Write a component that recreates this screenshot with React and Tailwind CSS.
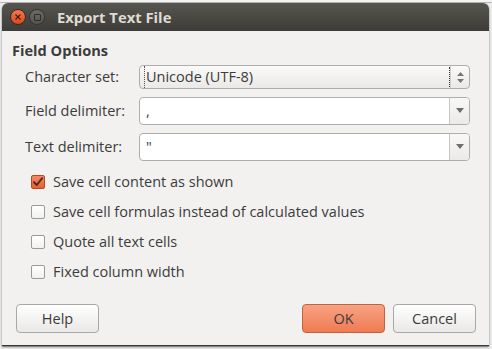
import React from "react";

const font = { fontFamily: '"Open Sans", "Noto Sans", "DejaVu Sans", sans-serif' };

function Checkbox({ checked }) {
  if (checked) {
    return (
      <span className="w-[14px] h-[14px] rounded-[2px] border border-[#b54a24] bg-gradient-to-b from-[#f48a62] to-[#e5622f] flex items-center justify-center shrink-0">
        <svg width="12" height="12" viewBox="0 0 12 12">
          <path d="M2 6.2 L4.8 9 L10.2 2.2" fill="none" stroke="#5a2a18" strokeWidth="2" strokeLinecap="round" strokeLinejoin="round" />
        </svg>
      </span>
    );
  }
  return (
    <span className="w-[14px] h-[14px] rounded-[2px] border border-[#9a9a9a] bg-gradient-to-b from-[#ffffff] to-[#f1f1f1] shrink-0" />
  );
}

function Entry({ value }) {
  return (
    <div className="flex-1 h-[28px] flex rounded-[4px] border border-[#b0aeab] bg-white overflow-hidden">
      <div className="flex-1 pl-[6px] flex items-center text-[14.5px] text-[#3c3c3c]">{value}</div>
      <div className="w-[20px] border-l border-[#c8c6c3] bg-gradient-to-b from-[#f8f8f8] to-[#eceae8] flex items-center justify-center">
        <svg width="8" height="6" viewBox="0 0 8 6">
          <path d="M0 0 L8 0 L4 5 Z" fill="#6e6e6e" />
        </svg>
      </div>
    </div>
  );
}

export default function App() {
  return (
    <div className="w-[492px] h-[349px] bg-[#ececec] overflow-hidden" style={font}>
      <div className="h-[3px] bg-[#f4f4f4] border-b border-[#b8b8b8] text-[10px] leading-[3px]" />
      <div className="pl-[2px] flex">
        <div className="w-[487px] h-[343px] flex flex-col rounded-t-[6px] overflow-hidden bg-[#f2f1f0] border-b border-[#3a3a3a] shadow-[0_1px_2px_rgba(0,0,0,0.6)]">
          {/* Title bar */}
          <div className="h-[28px] flex items-center bg-gradient-to-b from-[#57554f] to-[#3d3c38] pl-[8px]">
            <div className="w-[16px] h-[16px] rounded-full bg-gradient-to-b from-[#f5784a] to-[#d9481c] border border-[#3a2a22] flex items-center justify-center">
              <svg width="6" height="6" viewBox="0 0 6 6">
                <path d="M0.5 0.5 L5.5 5.5 M5.5 0.5 L0.5 5.5" stroke="#4a1e10" strokeWidth="1.2" />
              </svg>
            </div>
            <div className="ml-[3px] w-[16px] h-[16px] rounded-full bg-gradient-to-b from-[#6c6b66] to-[#55544f] border border-[#35342f] flex items-center justify-center">
              <div className="w-[7px] h-[7px] border border-[#2e2d29] rounded-[1px]" />
            </div>
            <div className="ml-[12px] text-[14.8px] font-bold text-[#dfdbd2] leading-none">Export Text File</div>
          </div>
          {/* Body */}
          <div className="flex-1 flex flex-col px-[10px]">
            <div className="mt-[9px] text-[14.6px] font-bold text-[#3c3c3c] leading-[20px]">Field Options</div>
            <div className="mt-[5px] pl-[13px] pr-[9px] flex flex-col gap-[8px]">
              <div className="flex items-center">
                <div className="w-[114px] text-[14.5px] text-[#3c3c3c]">Character set:</div>
                <div className="flex-1 h-[24px] flex rounded-[4px] border border-[#b0aeab] bg-gradient-to-b from-[#fafafa] to-[#ebe9e7] overflow-hidden">
                  <div className="flex-1 pl-[4px] flex items-center text-[14.5px] text-[#3c3c3c]">
                    <span className="border border-dotted border-[#555] border-r-0 border-y-0 pl-[1px]">Unicode (UTF-8)</span>
                  </div>
                  <div className="w-[1px] my-[1px] border-l border-dotted border-[#333]" />
                  <div className="w-[19px] border-l border-[#d0cecb] flex flex-col items-center justify-center gap-[3px]">
                    <svg width="7" height="4" viewBox="0 0 7 4"><path d="M0 4 L3.5 0 L7 4 Z" fill="#777" /></svg>
                    <svg width="7" height="4" viewBox="0 0 7 4"><path d="M0 0 L7 0 L3.5 4 Z" fill="#777" /></svg>
                  </div>
                </div>
              </div>
              <div className="flex items-center">
                <div className="w-[114px] text-[14.5px] text-[#3c3c3c]">Field delimiter:</div>
                <Entry value="," />
              </div>
              <div className="flex items-center">
                <div className="w-[114px] text-[14.5px] text-[#3c3c3c]">Text delimiter:</div>
                <Entry value={'"'} />
              </div>
            </div>
            <div className="mt-[6px] pl-[19px] flex flex-col">
              {[
                ["Save cell content as shown", true],
                ["Save cell formulas instead of calculated values", false],
                ["Quote all text cells", false],
                ["Fixed column width", false],
              ].map(([t, c]) => (
                <div key={t} className="h-[30px] flex items-center gap-[8px]">
                  <Checkbox checked={c} />
                  <span className="text-[14.5px] text-[#3c3c3c]">{t}</span>
                </div>
              ))}
            </div>
            <div className="mt-auto mb-[12px] flex items-center">
              <button className="ml-[4px] w-[83px] h-[29px] rounded-[4px] border border-[#aaa8a5] bg-gradient-to-b from-[#ffffff] to-[#e9e8e6] text-[14.5px] text-[#3c3c3c]">Help</button>
              <div className="flex-1" />
              <button className="w-[83px] h-[29px] rounded-[4px] border border-[#c2623e] bg-gradient-to-b from-[#f7a283] to-[#ef7a52] text-[14.5px] text-[#3c3c3c]">OK</button>
              <button className="ml-[8px] mr-[3px] w-[83px] h-[29px] rounded-[4px] border border-[#aaa8a5] bg-gradient-to-b from-[#ffffff] to-[#e9e8e6] text-[14.5px] text-[#3c3c3c]">Cancel</button>
            </div>
          </div>
        </div>
      </div>
    </div>
  );
}
